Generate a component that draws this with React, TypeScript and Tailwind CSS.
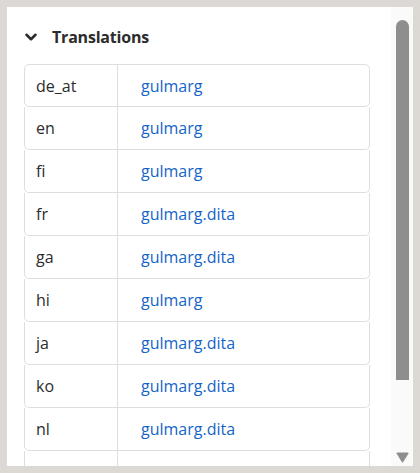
import { ChevronDown } from "lucide-react";

const rows: [string, string][] = [
  ["de_at", "gulmarg"],
  ["en", "gulmarg"],
  ["fi", "gulmarg"],
  ["fr", "gulmarg.dita"],
  ["ga", "gulmarg.dita"],
  ["hi", "gulmarg"],
  ["ja", "gulmarg.dita"],
  ["ko", "gulmarg.dita"],
  ["nl", "gulmarg.dita"],
  ["", ""],
];

export default function App() {
  return (
    <div
      className="h-[473px] w-[420px] bg-[#dcd9d5] p-[7px]"
      style={{ fontFamily: '"Open Sans", "Noto Sans", sans-serif' }}
    >
      <div className="flex h-[459px] w-[406px] overflow-hidden">
        {/* panel body */}
        <div className="flex-1 overflow-hidden bg-white pl-[17px] pr-[21px]">
          <div className="flex h-[57px] items-center gap-[12px] pt-[3px]">
            <ChevronDown size={18} strokeWidth={3.4} className="-ml-[2px] text-[#2c2c2c]" />
            <span className="text-[16px] font-bold tracking-[-0.2px] text-[#2c2c2c]">
              Translations
            </span>
          </div>
          <div className="flex flex-col">
            {rows.map(([lang, file], i) => (
              <div
                key={i}
                className={
                  i === 0
                    ? "flex h-[43px] shrink-0 rounded-[5px] border border-[#dedede] text-[16px]"
                    : "flex h-[43px] shrink-0 rounded-b-[5px] border-x border-b border-[#dedede] text-[16px]"
                }
              >
                <div className="flex w-[93px] items-center border-r border-[#dedede] pl-[11px] text-[#2c2c2c]">
                  {lang}
                </div>
                <div className="flex items-center pl-[23px] text-[#1464c8]">{file}</div>
              </div>
            ))}
          </div>
        </div>
        {/* scrollbar */}
        <div className="relative w-[22px] bg-[#fafafa]">
          <div className="absolute left-[5px] top-[13px] h-[360px] w-[13px] rounded-t-full rounded-b-[6px] bg-[#8e8e8e]" />
          <svg
            className="absolute bottom-[3px] left-[5px]"
            width="13"
            height="11"
            viewBox="0 0 13 11"
          >
            <path d="M0.5 1.5 Q0.5 0.5 1.5 0.5 L11.5 0.5 Q12.5 0.5 12.5 1.5 L7.2 10 Q6.5 11 5.8 10 Z" fill="#8e8e8e" />
          </svg>
        </div>
      </div>
    </div>
  );
}
